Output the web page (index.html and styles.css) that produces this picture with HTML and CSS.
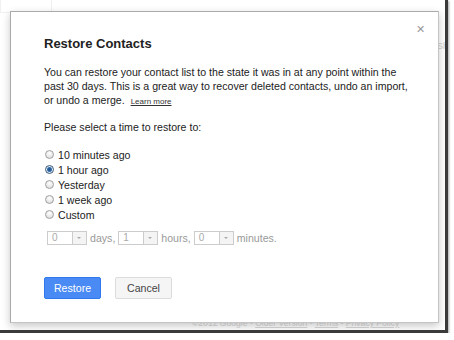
FILE: index.html
```html
<!DOCTYPE html>
<html lang="en">
<head>
    <meta charset="UTF-8">
    <title>Restore Contacts</title>
    <link rel="stylesheet" href="styles.css">
</head>
<body>
    <div class="shot">
        <div class="page-tab"></div>
        <div class="page-side">Sh</div>
        <div class="page-footer">©2012 Google - <a href="#">Older Version</a> - <a href="#">Terms</a> - <a href="#">Privacy Policy</a></div>

        <div class="dialog">
            <span class="close">&#x2715;</span>
            <h2 class="title">Restore Contacts</h2>
            <p class="intro">
                You can restore your contact list to the state it was in at any point within the<br>
                past 30 days. This is a great way to recover deleted contacts, undo an import,<br>
                or undo a merge. <a href="#" class="learn">Learn more</a>
            </p>
            <p class="prompt">Please select a time to restore to:</p>

            <div class="options">
                <label class="option"><input type="radio" name="t"> 10 minutes ago</label>
                <label class="option"><input type="radio" name="t" checked> 1 hour ago</label>
                <label class="option"><input type="radio" name="t"> Yesterday</label>
                <label class="option"><input type="radio" name="t"> 1 week ago</label>
                <label class="option"><input type="radio" name="t"> Custom</label>
            </div>

            <div class="custom">
                <div class="pick"><span class="val">0</span><span class="arrow"></span></div>
                <span>days,</span>
                <div class="pick"><span class="val">1</span><span class="arrow"></span></div>
                <span>hours,</span>
                <div class="pick"><span class="val">0</span><span class="arrow"></span></div>
                <span>minutes.</span>
            </div>

            <div class="actions">
                <button class="btn btn-primary">Restore</button>
                <button class="btn">Cancel</button>
            </div>
        </div>
    </div>
</body>
</html>
```

FILE: styles.css
```css
body {
    margin: 0;
    background-color: #fff;
    font-family: "Liberation Sans", Arial, sans-serif;
    color: #222;
}

/* the captured window, with its dark frame */
.shot {
    position: relative;
    width: 448px;
    height: 333px;
    padding: 11px 0 0 10px;
    box-sizing: border-box;
    background-color: #fff;
    border-right: 3px solid #3a3a3a;
    border-bottom: 3px solid #3a3a3a;
    box-shadow: 1px 1px 2px rgba(0, 0, 0, 0.35);
    overflow: hidden;
}

.page-tab {
    position: absolute;
    top: -1px;
    left: 0;
    width: 50px;
    height: 12px;
    border: 1px solid #f0f0f0;
}

.page-side {
    position: absolute;
    top: 41px;
    left: 437px;
    font-size: 9px;
    color: #ccc;
}

.page-footer {
    position: absolute;
    top: 318px;
    left: 192px;
    font-size: 8.6px;
    color: #d8d8d8;
    white-space: nowrap;
}

.page-footer a {
    color: #d8d8d8;
}

/* dialog */
.dialog {
    position: relative;
    z-index: 1;
    width: 429px;
    height: 312px;
    box-sizing: border-box;
    padding: 24px 0 0 33px;
    background-color: #fff;
    border: 1px solid #c4c4c4;
    border-top-color: #aaa;
    border-left-color: #aaa;
    box-shadow: 0 3px 8px rgba(0, 0, 0, 0.22);
}

.close {
    position: absolute;
    top: 11px;
    right: 13px;
    font-size: 11px;
    color: #999;
}

.title {
    margin: 0;
    font-size: 13px;
    line-height: 16px;
    font-weight: bold;
    color: #222;
}

.intro {
    margin: 13px 0 0;
    font-size: 10.6px;
    line-height: 14px;
}

.learn {
    margin-left: 3px;
    font-size: 8px;
    color: #333;
}

.prompt {
    margin: 11px 0 0;
    font-size: 10.6px;
    line-height: 14px;
}

.options {
    margin-top: 13px;
    display: flex;
    flex-direction: column;
}

.option {
    display: flex;
    align-items: center;
    height: 15px;
    font-size: 10.6px;
}

.option input {
    appearance: none;
    margin: 0 4px 0 1px;
    width: 9px;
    height: 9px;
    border: 1px solid #a0a0a0;
    border-radius: 50%;
    background: radial-gradient(circle at 50% 30%, #fff, #d8d8d8);
}

.option input:checked {
    border-color: #3b5a7a;
    background: radial-gradient(circle, #1f4f86 0, #2d6aa8 2px, #e6eef6 3px, #cfd8e2 100%);
}

.custom {
    margin-top: 9px;
    margin-left: 3px;
    display: flex;
    align-items: center;
    gap: 3px;
    font-size: 10.6px;
    color: #999;
}

.pick {
    display: flex;
    width: 40px;
    height: 14px;
    box-sizing: border-box;
    border: 1px solid #ccc;
    background-color: #fff;
}

.pick .val {
    flex: 1;
    padding-left: 4px;
    font-size: 10px;
    line-height: 12px;
    color: #aaa;
}

.pick .arrow {
    position: relative;
    width: 13px;
    border-left: 1px solid #ccc;
    background-color: #f4f4f4;
}

.pick .arrow::after {
    content: "";
    position: absolute;
    top: 5px;
    left: 4px;
    border-left: 2px solid transparent;
    border-right: 2px solid transparent;
    border-top: 2px solid #aaa;
}

.actions {
    margin-top: 32px;
    display: flex;
    gap: 14px;
}

.btn {
    width: 57px;
    height: 22px;
    padding: 0;
    font-family: inherit;
    font-size: 10.6px;
    color: #444;
    background-color: #f5f5f5;
    border: 1px solid #dcdcdc;
    border-radius: 2px;
}

.btn-primary {
    color: #fff;
    background-color: #4a8af4;
    border-color: #3079ed;
}
```
